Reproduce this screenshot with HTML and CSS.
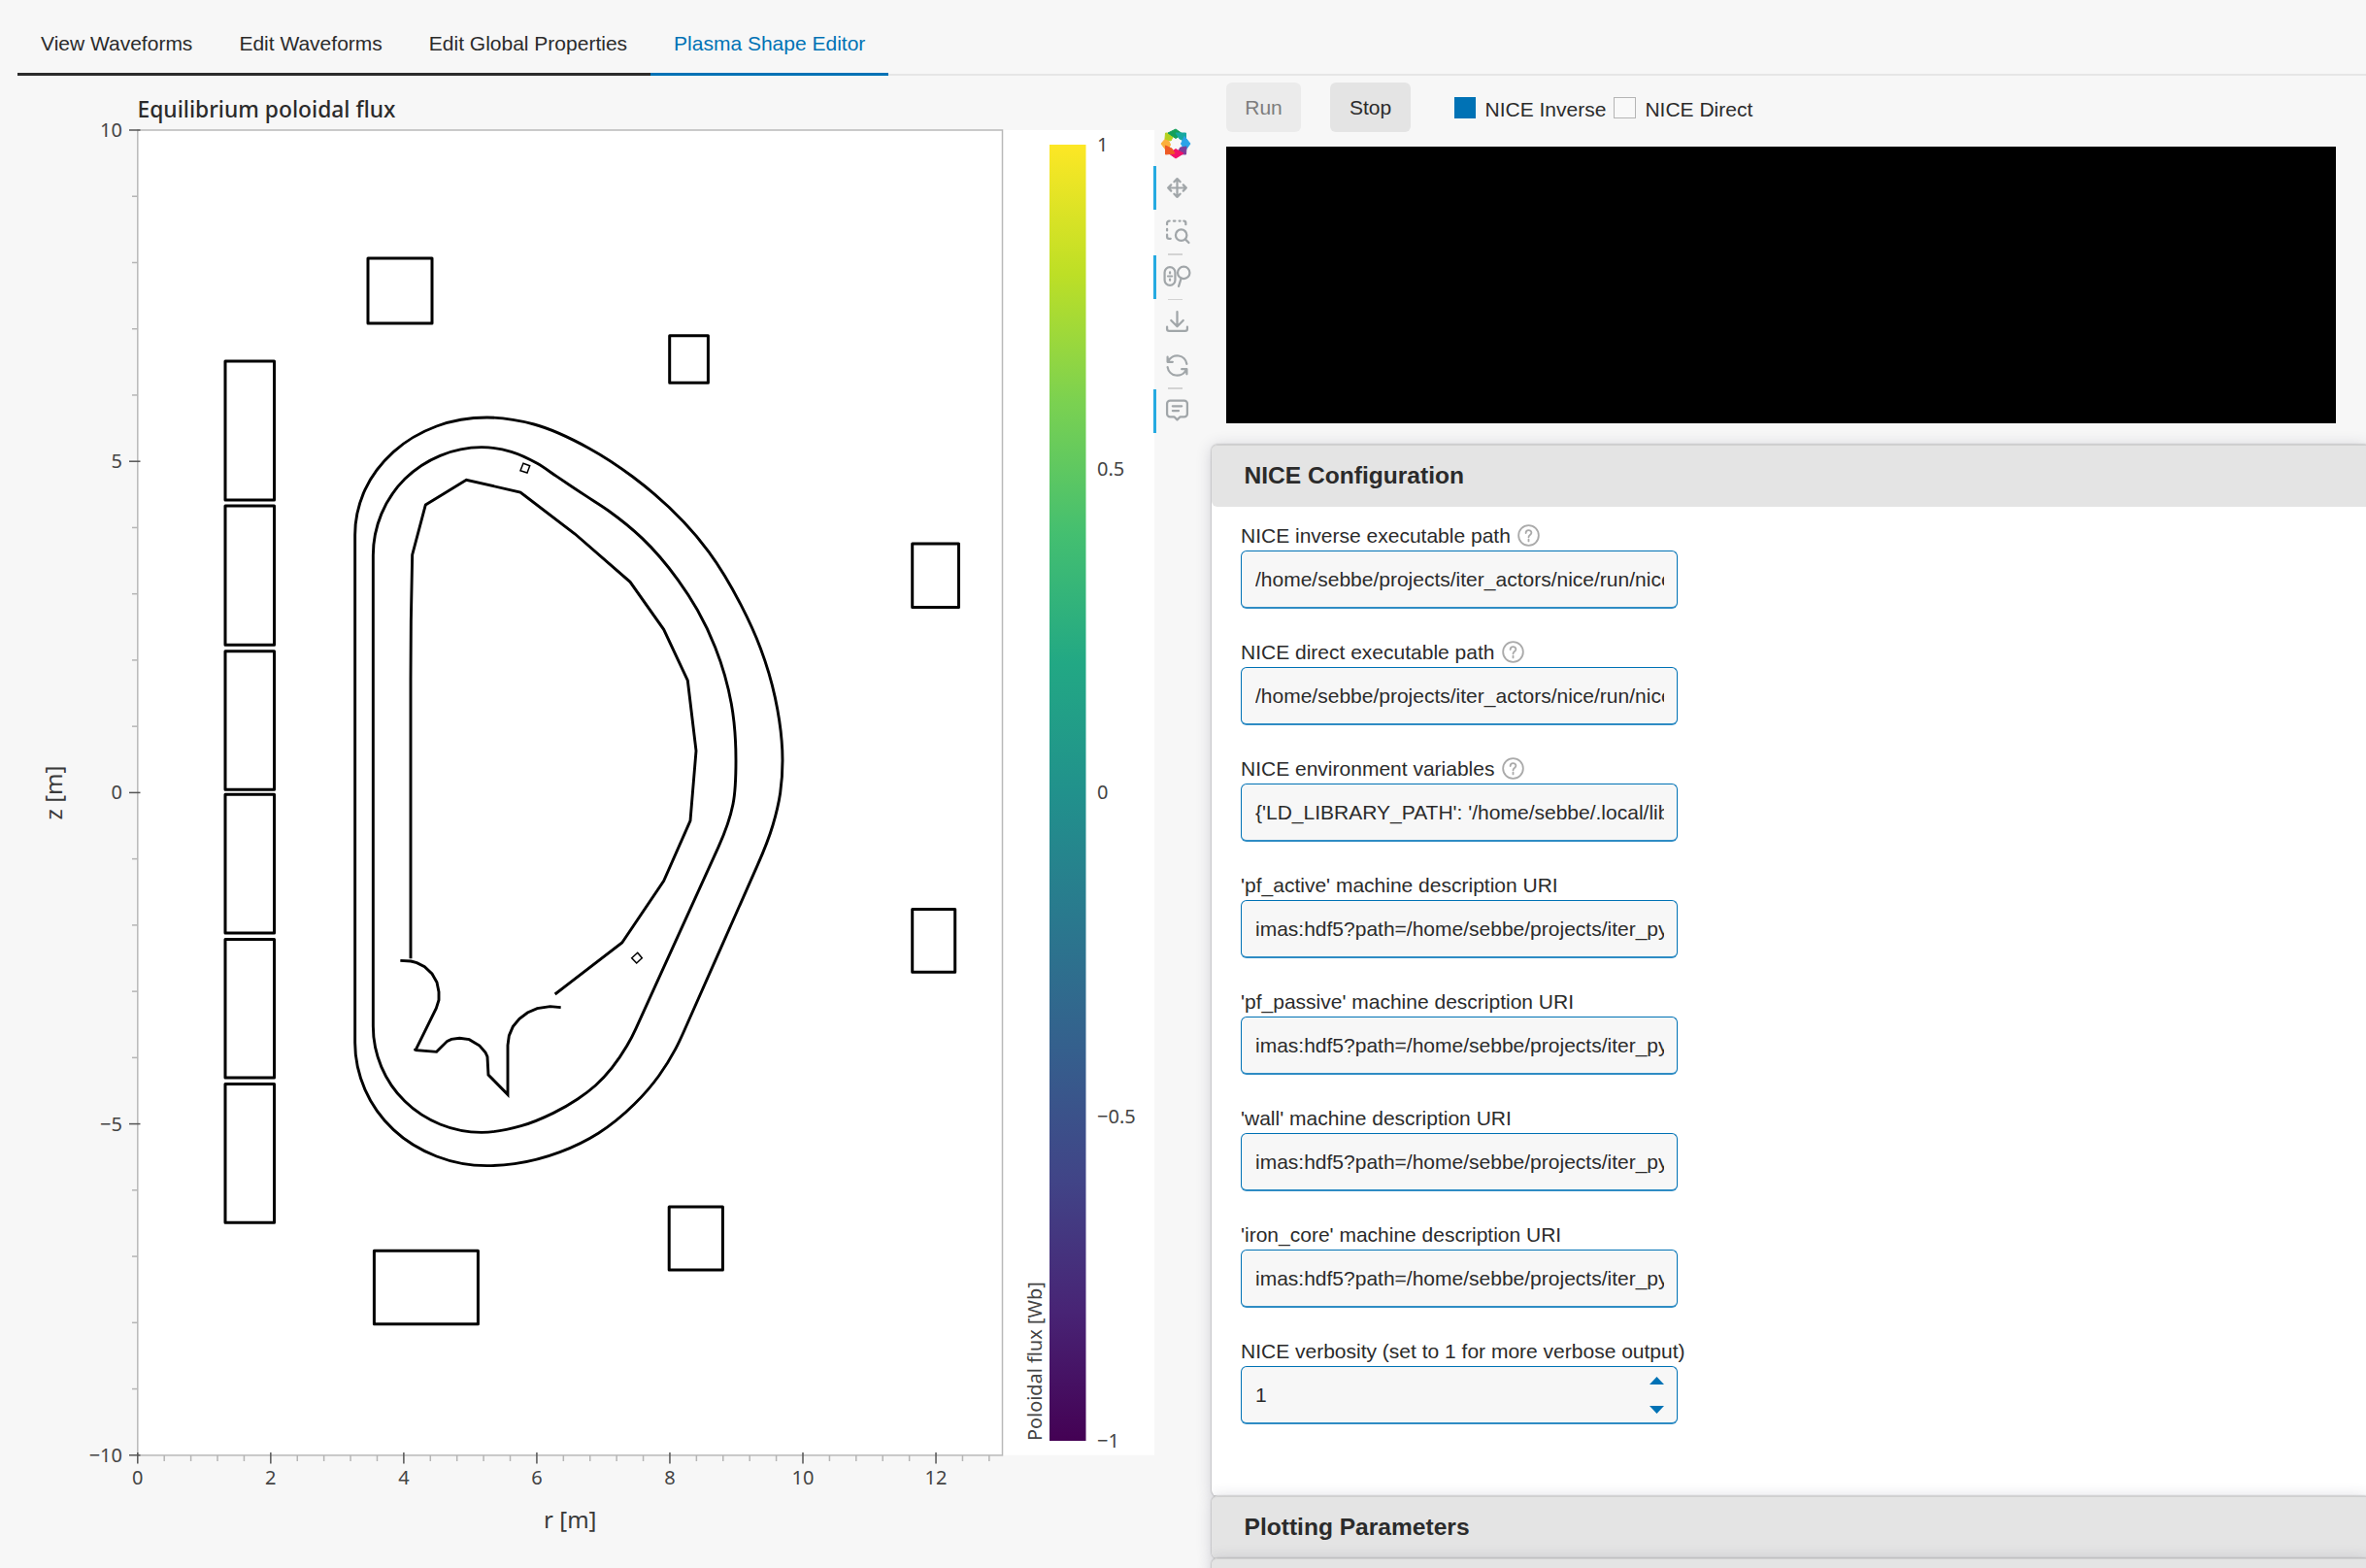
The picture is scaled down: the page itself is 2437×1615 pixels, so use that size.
FILE: index.html
```html
<!DOCTYPE html>
<html lang="en">
<head>
<meta charset="utf-8">
<title>Plasma Shape Editor</title>
<link rel="stylesheet" href="styles.css">
</head>
<body>
<nav class="tabs">
  <div class="tab">View Waveforms</div>
  <div class="tab">Edit Waveforms</div>
  <div class="tab">Edit Global Properties</div>
  <div class="tab active">Plasma Shape Editor</div>
  <div class="tabs-rest"></div>
</nav>
<main class="content">
  <section class="figure">
    <svg class="plot" width="1188" height="1537" viewBox="0 78 1188 1537">
      <defs>
        <linearGradient id="viridis" x1="0" y1="1" x2="0" y2="0">
          <stop offset="0" stop-color="#440154"/><stop offset=".1" stop-color="#482475"/>
          <stop offset=".2" stop-color="#414487"/><stop offset=".3" stop-color="#355f8d"/>
          <stop offset=".4" stop-color="#2a788e"/><stop offset=".5" stop-color="#21918c"/>
          <stop offset=".6" stop-color="#22a884"/><stop offset=".7" stop-color="#44bf70"/>
          <stop offset=".8" stop-color="#7ad151"/><stop offset=".9" stop-color="#bddf26"/>
          <stop offset="1" stop-color="#fde725"/>
        </linearGradient>
      </defs>
      <rect class="area" x="141.5" y="134" width="1047.5" height="1364.7"/>
      <rect class="frame" x="141.8" y="134" width="890.7" height="1364.9"/>
      <g id="ticks"></g>
      <text class="title" x="141.5" y="120.500">Equilibrium poloidal flux</text>
      <text class="axis mid" x="587.3" y="1574">r [m]</text>
      <text class="axis mid" transform="translate(64 816.5) rotate(-90)">z [m]</text>
      <g class="coil">
        <rect x="232" y="372" width="50.5" height="143"/>
        <rect x="232" y="521" width="50.5" height="143.3"/>
        <rect x="232" y="670.7" width="50.5" height="142.5"/>
        <rect x="232" y="818.3" width="50.5" height="142.7"/>
        <rect x="232" y="967.5" width="50.5" height="142.5"/>
        <rect x="232" y="1116.5" width="50.5" height="142.8"/>
        <rect x="379" y="266" width="66" height="67"/>
        <rect x="689.7" y="345.8" width="39.7" height="48.5"/>
        <rect x="939.7" y="560" width="47.8" height="65.5"/>
        <rect x="939.7" y="936.5" width="44" height="64.8"/>
        <rect x="385.4" y="1288.3" width="107" height="75.4"/>
        <rect x="689.2" y="1243" width="55.2" height="65"/>
      </g>
      <path id="outer" class="vessel"/>
      <path id="inner" class="vessel"/>
      <path id="wall" class="vessel"/>
      <path id="divertor" class="vessel"/>
      <path class="probe" d="M539 477.3L545.7 479.7L543 487L536 484.7Z"/>
      <path class="probe" d="M656.7 981.3L661.3 986.7L655.7 992L650.7 986.7Z"/>
      <rect x="1081" y="149" width="37.5" height="1335" fill="url(#viridis)"/>
      <text class="tick" x="1130" y="155.500">1</text>
      <text class="tick" x="1130" y="489.500">0.5</text>
      <text class="tick" x="1130" y="823">0</text>
      <text class="tick" x="1130" y="1157">−0.5</text>
      <text class="tick" x="1130" y="1490.500">−1</text>
      <text class="bar-title" transform="translate(1073.3 1484) rotate(-90)">Poloidal flux [Wb]</text>
    </svg>
    <div class="toolbar">
      <svg class="logo" width="32" height="32" viewBox="-16 -16 32 32">
        <path fill="#fbb03b" stroke="#fbb03b" d="M-15 0L-9-7L-5.500 1L-9 8Z"/>
        <path fill="#b5d11f" stroke="#b5d11f" d="M-10.500-11L-1-10.500L-5-3L-11-5Z"/>
        <path fill="#14a05a" stroke="#14a05a" d="M0-15L7-10L0-5.500L-8-11Z"/>
        <path fill="#16a8a0" stroke="#16a8a0" d="M10.500-11L10.500-2L4-5L0-11Z"/>
        <path fill="#29a3e8" stroke="#29a3e8" d="M15 0L9.500 7.500L5.500 0L9-7.500Z"/>
        <path fill="#7d3c98" stroke="#7d3c98" d="M10.500 11L2 10.500L4.500 4L11 3Z"/>
        <path fill="#f2106a" stroke="#f2106a" d="M0 15L-7 10L0 5.500L8 10Z"/>
        <path fill="#ee5a24" stroke="#ee5a24" d="M-10.500 11L-10.500 2L-4 5L-1 10Z"/>
      </svg>
      <div class="tool on"><svg viewBox="0 0 24 24"><path d="M18 9l3 3l-3 3M15 12h6M6 9l-3 3l3 3M3 12h6M9 18l3 3l3-3M12 15v6M15 6l-3-3l-3 3M12 3v18M9 12h6"/></svg></div>
      <div class="tool box-zoom"><svg viewBox="0 0 24 24"><path d="M2 6v-1.500a2 2 0 0 1 2-2h.5M8.500 2.500h1.500M14 2.500h1M18.500 2.500a2 2 0 0 1 2 2v1.500M2 10.500v1.500M2 16v2a2 2 0 0 0 2 2h1.500M20 20.500l3.500 3.500"/><circle cx="16" cy="16.500" r="5.500"/></svg></div>
      <hr>
      <div class="tool on"><svg class="wide" viewBox="0 0 30 24"><rect x="2.500" y="3" width="10.500" height="18" rx="5.200"/><path d="M5.800 12h4M7.800 8v1M7.800 15v1"/><circle cx="21.500" cy="8.500" r="6"/><path d="M19 14l-2.500 8"/></svg></div>
      <hr>
      <div class="tool"><svg viewBox="0 0 24 24"><path d="M2 17v2a2 2 0 0 0 2 2h16a2 2 0 0 0 2-2v-2M6 10.500l6 6l6-6M12 2v14"/></svg></div>
      <div class="tool"><svg viewBox="0 0 24 24"><path d="M21.500 10.500a9.700 9.700 0 0 0-18.200-3M2.500 3.500v5h5M2.500 13.500a9.700 9.700 0 0 0 18.200 3M21.500 20.500v-5h-5"/></svg></div>
      <hr>
      <div class="tool on"><svg viewBox="0 0 24 24"><path d="M7.500 8h9M7.500 12.500h6M5 2.500h14a3 3 0 0 1 3 3v10a3 3 0 0 1-3 3h-4l-3 3l-3-3h-4a3 3 0 0 1-3-3v-10a3 3 0 0 1 3-3z"/></svg></div>
    </div>
  </section>
  <section class="side">
    <div class="controls">
      <button class="btn disabled">Run</button>
      <button class="btn">Stop</button>
      <div class="checks">
        <span class="box checked"></span><span class="check-label">NICE Inverse</span>
        <span class="box"></span><span class="check-label">NICE Direct</span>
      </div>
    </div>
    <div class="terminal"></div>
    <div class="card">
      <h3 class="card-head">NICE Configuration</h3>
      <div class="card-body">
        <div class="field"><label>NICE inverse executable path <svg class="help" viewBox="0 0 24 24"><circle cx="12" cy="12" r="10.800"/><path d="M9 9.500c0-4 6-4 6-.3c0 2.300-3 2.400-3 4.600M12 16.300v1.900"/></svg></label><input class="input" value="/home/sebbe/projects/iter_actors/nice/run/nice"></div>
        <div class="field"><label>NICE direct executable path <svg class="help" viewBox="0 0 24 24"><circle cx="12" cy="12" r="10.800"/><path d="M9 9.500c0-4 6-4 6-.3c0 2.300-3 2.400-3 4.600M12 16.300v1.900"/></svg></label><input class="input" value="/home/sebbe/projects/iter_actors/nice/run/nice"></div>
        <div class="field"><label>NICE environment variables <svg class="help" viewBox="0 0 24 24"><circle cx="12" cy="12" r="10.800"/><path d="M9 9.500c0-4 6-4 6-.3c0 2.300-3 2.400-3 4.600M12 16.300v1.900"/></svg></label><input class="input" value="{'LD_LIBRARY_PATH': '/home/sebbe/.local/lib"></div>
        <div class="field"><label>'pf_active' machine description URI</label><input class="input" value="imas:hdf5?path=/home/sebbe/projects/iter_py"></div>
        <div class="field"><label>'pf_passive' machine description URI</label><input class="input" value="imas:hdf5?path=/home/sebbe/projects/iter_py"></div>
        <div class="field"><label>'wall' machine description URI</label><input class="input" value="imas:hdf5?path=/home/sebbe/projects/iter_py"></div>
        <div class="field"><label>'iron_core' machine description URI</label><input class="input" value="imas:hdf5?path=/home/sebbe/projects/iter_py"></div>
        <div class="field"><label>NICE verbosity (set to 1 for more verbose output)</label><div class="input number"><span>1</span><svg class="spin" width="15" height="38" viewBox="0 0 15 38"><path d="M0 8L7.500 0L15 8ZM0 30L7.500 38L15 30Z"/></svg></div></div>
      </div>
    </div>
    <div class="card"><h3 class="card-head">Plotting Parameters</h3></div>
    <div class="card"><h3 class="card-head"></h3></div>
  </section>
</main>
<script src="plot.js"></script>
</body>
</html>
```
FILE: styles.css
```css
* { box-sizing: border-box; }
body {
  margin: 0;
  height: 1615px;
  overflow: hidden;
  background: #f7f7f7;
  color: #2b2b2b;
  font: 21px/24px "Liberation Sans", Arial, sans-serif;
}
.tabs { display: flex; height: 78px; padding: 14px 0 0 18px; }
.tab { padding: 19px 24px 0; border-bottom: 3px solid #2b2b2b; white-space: nowrap; }
.tab.active { color: #0072b5; border-color: #0072b5; }
.tabs-rest { flex: 1; border-bottom: 2px solid #e6e6e6; }
.content { display: flex; height: 1537px; }
.figure { display: flex; width: 1247.500px; flex: none; }
.plot { display: block; flex: none; overflow: visible; }
.plot text { font-family: "Noto Sans", "Open Sans", sans-serif; fill: #444; }
.plot .title { font-size: 22.800px; font-weight: 500; fill: #2b2b2b; }
.plot .axis { font-size: 24px; fill: #3a3a3a; }
.plot .tick { font-size: 20px; }
.plot .bar-title { font-size: 19.900px; }
.plot .mid { text-anchor: middle; }
.plot .end { text-anchor: end; }
.area { fill: #fff; }
.frame { fill: none; stroke: #b9b9b9; stroke-width: 1.500; }
.major { stroke: #555; stroke-width: 1.500; }
.minor { stroke: #b5b5b5; stroke-width: 1.500; }
.coil { fill: none; stroke: #000; stroke-width: 3; stroke-linejoin: round; }
.vessel { fill: none; stroke: #000; stroke-width: 2.900; }
.probe { fill: none; stroke: #000; stroke-width: 1.500; }
.toolbar { width: 45px; padding-top: 54px; }
.logo { display: block; margin: 0 0 7px 6.500px; }
.tool { height: 45px; padding: 0 0 .5px; border-left: 3px solid transparent; display: flex; align-items: center; justify-content: center; }
.tool.box-zoom { padding-bottom: 2px; }
.tool.on { border-color: #26aae1; }
.tool svg { width: 25px; height: 25px; fill: none; stroke: #a1a6a9; stroke-width: 2.150; stroke-linecap: round; stroke-linejoin: round; overflow: visible; }
.tool svg.wide { width: 31px; }
.toolbar hr { width: 15px; height: 1.500px; margin: 0 0 0 15px; border: 0; background: #d3d3d3; }
.side { flex: 1; min-width: 0; }
.controls { display: flex; align-items: center; height: 73px; padding: 0 0 8px 15.500px; }
.btn { width: 77px; height: 51px; padding: 0; border: 0; border-radius: 6px; background: #e4e4e4; color: #2b2b2b; font: inherit; }
.btn + .btn { width: 83px; margin-left: 30px; }
.btn.disabled { background: #ebebeb; color: #7d7d7d; }
.checks { display: flex; align-items: center; margin: 1px 0 0 44.500px; }
.box { width: 22.500px; height: 22.500px; border: 1.500px solid #b5b5b5; background: #f9f9f9; }
.box.checked { background: #0072b5; border-color: #0072b5; }
.check-label { margin: 3px 8px 0 9.500px; white-space: nowrap; }
.terminal { height: 285px; margin: 0 31px 21.500px 15.500px; background: #000; }
.card { position: relative; background: #fff; border-radius: 6px 0 0 6px; box-shadow: 0 0 2px #888, 0 2px 16px rgba(50, 50, 80, .22); }
.card-head { height: 64px; margin: 0; padding: 17.500px 34px 0; border-top: 1.500px solid #d0d0d0; border-radius: 6px 0 0 6px; background: #e4e4e4; font-size: 24.570px; line-height: 28px; }
.card-body { height: 1019px; padding: 17.500px 0 0 30.500px; }
.field { width: 450px; height: 120px; }
.field label { display: flex; align-items: center; height: 28px; padding-bottom: 2.500px; white-space: nowrap; }
.help { width: 23px; height: 23px; margin-left: 7.500px; fill: none; stroke: #aaa; stroke-width: 1.900; stroke-linecap: round; }
.input { display: block; width: 450px; height: 60px; padding: 0 13.500px 0 14px; border: 1px solid #0072b5; border-bottom: 2px solid #2f8cc4; border-radius: 6px; outline: 0; background: #f7f7f7; color: inherit; font: inherit; }
.input.number { display: flex; align-items: center; justify-content: space-between; }
.spin { fill: #0072b5; }
```
FILE: plot.js
```js
const SVG = "http://www.w3.org/2000/svg";
const X0 = 141.8, Y0 = 816.4, SX = 68.52, SY = 68.24;
const ticks = document.getElementById("ticks");

function line(x1, y1, x2, y2, cls) {
  const el = document.createElementNS(SVG, "path");
  el.setAttribute("d", `M${x1} ${y1}L${x2} ${y2}`);
  el.setAttribute("class", cls);
  ticks.append(el);
}
function label(x, y, value, cls) {
  const el = document.createElementNS(SVG, "text");
  el.setAttribute("x", x);
  el.setAttribute("y", y);
  el.setAttribute("class", "tick " + cls);
  el.textContent = String(value).replace("-", "−");
  ticks.append(el);
}
for (let i = 0; i <= 32; i++) {
  const x = X0 + i * 0.4 * SX;
  if (i % 5) line(x, 1499, x, 1505, "minor");
  else {
    line(x, 1496, x, 1507.5, "major");
    label(x, 1529, i * 0.4, "mid");
  }
}
for (let z = -10; z <= 10; z++) {
  const y = Y0 - z * SY;
  if (z % 5) line(136, y, 141.5, y, "minor");
  else {
    line(133, y, 144.5, y, "major");
    label(126, y + 7, z, "end");
  }
}

// Outlines are digitised on a grid of thirds of a pixel.
const toPlot = ([x, y]) => [340 + x / 3, 400 + y / 3];
function polyline(id, pts) {
  document.getElementById(id).setAttribute("d", "M" + pts.map(toPlot).map(p => p.join(" ")).join("L"));
}

// Smooth closed outline; a point may carry its own tangent as [x, y, tx, ty].
// Other tangents are those of the circle through the point and its neighbours.
function closedCurve(id, raw) {
  const n = raw.length, p = raw.map(toPlot);
  const unit = (x, y) => { const l = Math.hypot(x, y); return [x / l, y / l]; };
  const tan = raw.map((r, i) => {
    if (r.length > 2) return unit(r[2], r[3]);
    const a = p[(i + n - 1) % n], b = p[i], c = p[(i + 1) % n];
    const l1 = Math.hypot(b[0] - a[0], b[1] - a[1]), l2 = Math.hypot(c[0] - b[0], c[1] - b[1]);
    const w1 = l2 / l1, w2 = l1 / l2;
    return unit((b[0] - a[0]) * w1 + (c[0] - b[0]) * w2, (b[1] - a[1]) * w1 + (c[1] - b[1]) * w2);
  });
  let d = "M" + p[0].join(" ");
  for (let i = 0; i < n; i++) {
    const j = (i + 1) % n, b = p[i], c = p[j], s = tan[i], t = tan[j];
    const h = Math.hypot(c[0] - b[0], c[1] - b[1]) / 2.97;
    d += `C${b[0] + s[0] * h} ${b[1] + s[1] * h} ${c[0] - t[0] * h} ${c[1] - t[1] * h} ${c[0]} ${c[1]}`;
  }
  document.getElementById(id).setAttribute("d", d + "Z");
}

closedCurve("outer", [[77,2022,0,-1],[77,452,0,-1],[108,313],[196,196],[329,117],[485,90,1,0],[630,111],[800,185],[935,273],[1170,505],[1270,670],[1330,803],[1375,955],[1398,1150,0,1],[1391,1250],[1368,1350],[1320,1475,-195,440],[1095,1983,-195,440],[1067,2042],[1016,2124],[940,2212],[830,2301],[710,2360],[570,2396],[485,2402,-1,0],[329,2373],[196,2291],[108,2167]]);
closedCurve("inner", [[133,1971,0,-1],[133,516,0,-1],[158.5,388],[231,280],[340,208],[468,182,1,0],[560,196],[640,232],[700,272,100,67],[790,332,100,66],[860,378],[965,464],[1075,592],[1135,685],[1190,800],[1240,975],[1254,1150,0,1],[1245,1285],[1200,1417,-255,561],[945,1978,-255,561],[917,2032],[820,2154],[765,2196],[690,2239],[590,2279],[468,2299,-1,0],[340,2274],[231,2203],[158.5,2096.5]]);
polyline("wall", [[249,1762],[249,900],[250,720],[254,514],[295,360],[421,283],[588,321],[757,450],[927,598],[1031,745],[1105,903],[1131,1120],[1113,1336],[1031,1522],[902,1713],[695,1872]]);
polyline("divertor", [[217,1768],[250,1770],[268,1775],[292,1787],[315,1809],[330,1835],[336,1865],[336,1890],[328,1915],[263,2047],[263,2045],[329,2050],[362,2017],[375,2011],[400,2008],[430,2012],[462,2031],[480,2052],[486,2065],[489,2121],[549,2182],[549,2030],[553,2000],[565,1972],[585,1948],[610,1929],[640,1916],[680,1910],[713,1913]]);
```
